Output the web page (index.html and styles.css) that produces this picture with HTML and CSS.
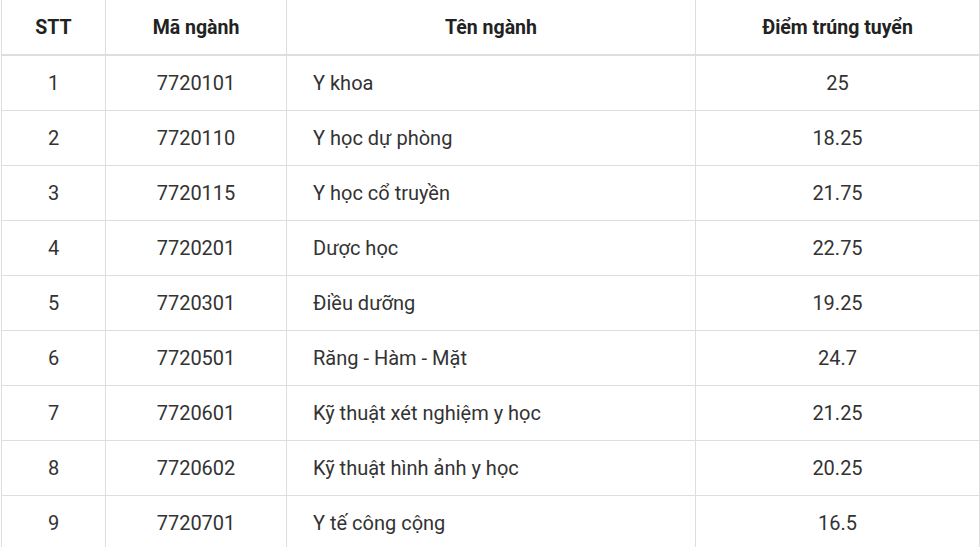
FILE: index.html
```html
<!DOCTYPE html>
<html lang="vi">
<head>
<meta charset="utf-8">
<link rel="stylesheet" href="styles.css">
</head>
<body>
<div class="wrap">
<table class="score-table">
  <colgroup>
    <col class="c1"><col class="c2"><col class="c3"><col class="c4">
  </colgroup>
  <thead>
    <tr><th>STT</th><th>Mã ngành</th><th>Tên ngành</th><th>Điểm trúng tuyển</th></tr>
  </thead>
  <tbody>
    <tr><td>1</td><td>7720101</td><td class="name">Y khoa</td><td>25</td></tr>
    <tr><td>2</td><td>7720110</td><td class="name">Y học dự phòng</td><td>18.25</td></tr>
    <tr><td>3</td><td>7720115</td><td class="name">Y học cổ truyền</td><td>21.75</td></tr>
    <tr><td>4</td><td>7720201</td><td class="name">Dược học</td><td>22.75</td></tr>
    <tr><td>5</td><td>7720301</td><td class="name">Điều dưỡng</td><td>19.25</td></tr>
    <tr><td>6</td><td>7720501</td><td class="name">Răng - Hàm - Mặt</td><td>24.7</td></tr>
    <tr><td>7</td><td>7720601</td><td class="name">Kỹ thuật xét nghiệm y học</td><td>21.25</td></tr>
    <tr><td>8</td><td>7720602</td><td class="name">Kỹ thuật hình ảnh y học</td><td>20.25</td></tr>
    <tr><td>9</td><td>7720701</td><td class="name">Y tế công cộng</td><td>16.5</td></tr>
  </tbody>
</table>
</div>
</body>
</html>
```
FILE: styles.css
```css
html, body {
  margin: 0;
  padding: 0;
  background: #fff;
}
body {
  font-family: Roboto, "Liberation Sans", sans-serif;
  color: #333;
  overflow: hidden;
}
.wrap {
  padding-left: 1px;
}
.score-table {
  border-collapse: collapse;
  table-layout: fixed;
  width: 978px;
}
.c1 { width: 104px; }
.c2 { width: 181px; }
.c3 { width: 409px; }
.c4 { width: 284px; }
.score-table th,
.score-table td {
  border: 1px solid #dedede;
  text-align: center;
  padding: 0 8px;
  font-size: 20px;
}
.score-table thead th {
  border-top: none;
  border-bottom: 2px solid #dedede;
  height: 52px;
  font-weight: 700;
  font-size: 19.5px;
  color: #222;
  padding-top: 1px;
  padding-bottom: 1px;
}
.score-table td {
  height: 54px;
}
.score-table td.name {
  text-align: left;
  padding-left: 26px;
}
```
